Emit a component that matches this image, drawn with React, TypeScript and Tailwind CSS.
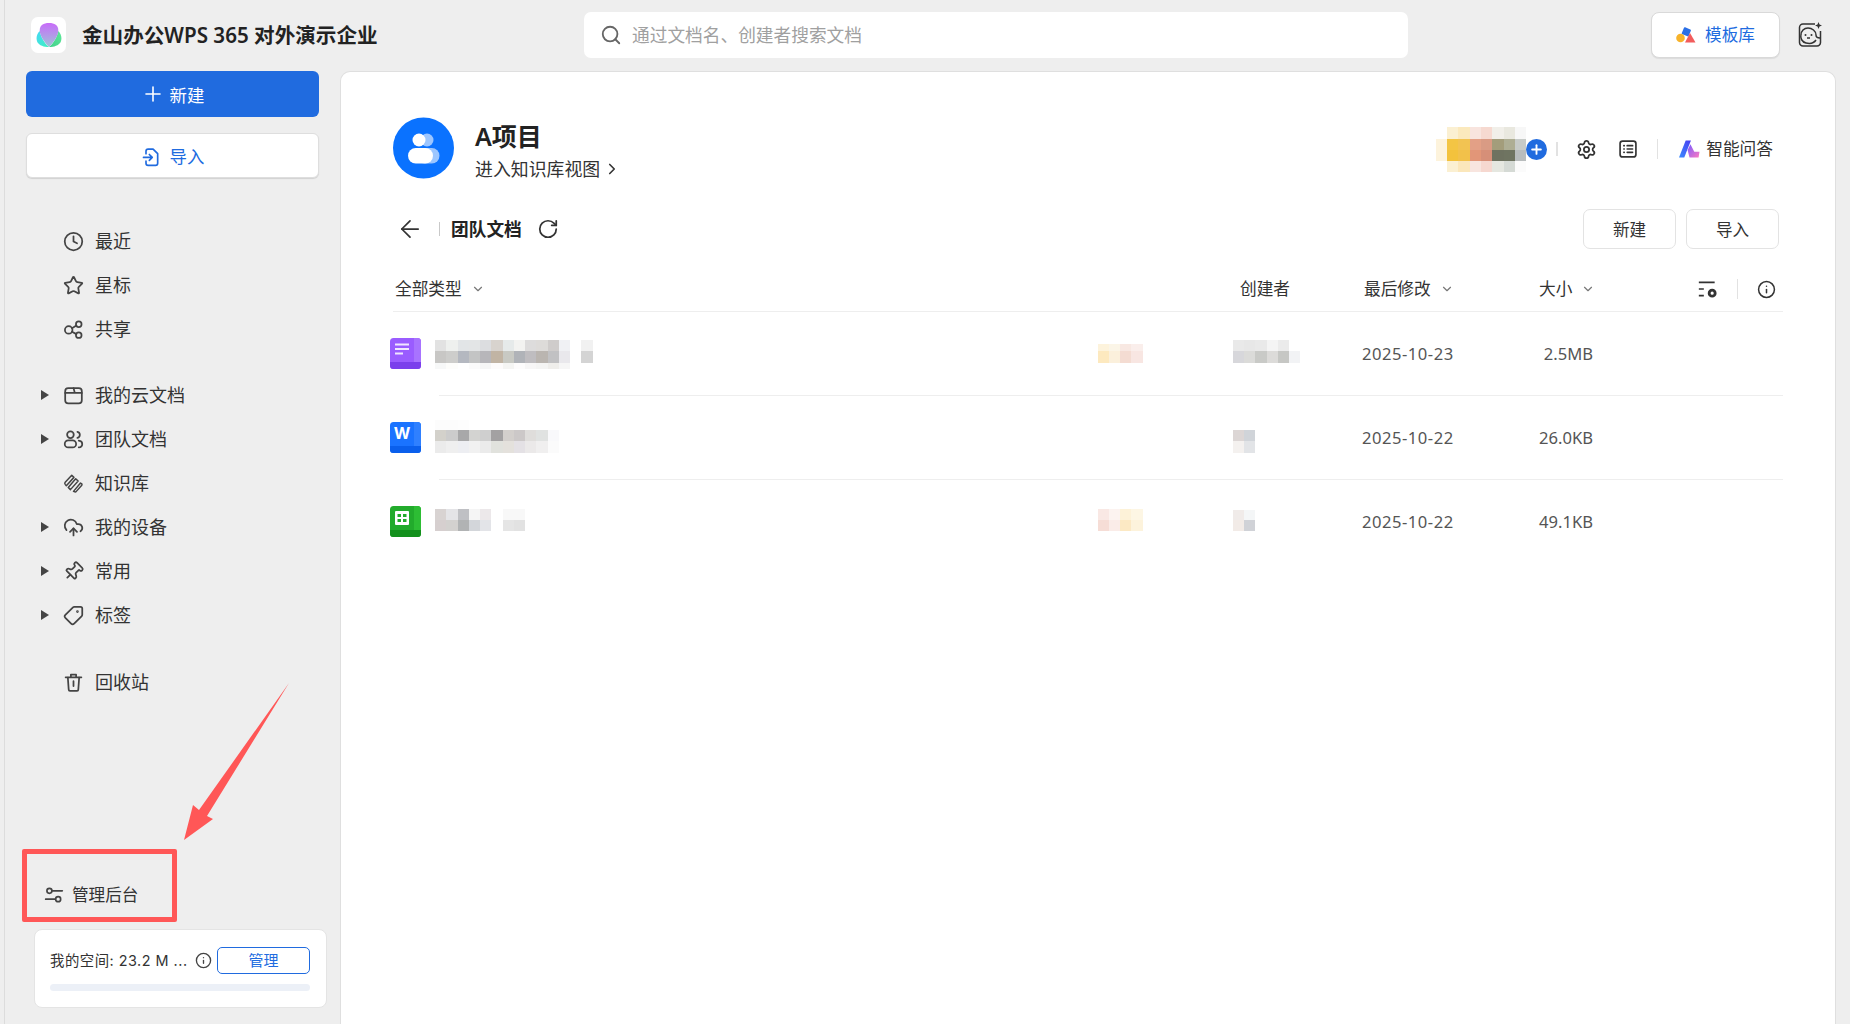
import { ArrowLeft, ChevronDown, ChevronRight, Clock, CloudUpload, Info, Pin, Plus, RotateCw, Search, Settings, Star, Tag } from "lucide-react";
import type { ReactNode } from "react";

type Grid = string[][];

// blurred-out names and avatars, one colour per mosaic cell
const AVATARS: Grid = [
  ["", "#fbf0d2", "#fbe9bd", "#f8e4de", "#f6d9d0", "#f1efe9", "#e9e8df", "#f7f7f7"],
  ["#fdf3dc", "#f3c544", "#f2c352", "#e3a086", "#d99b84", "#a39d7b", "#aeae94", "#c7cbc8"],
  ["#fdf3dc", "#f3c23c", "#f2c14a", "#e29678", "#d68f78", "#6e7260", "#6f7461", "#b8bcbd"],
  ["", "#fbf0d2", "#fbe7bb", "#f8e5df", "#f6d8d0", "#e5e7e0", "#d5dad5", "#fbfbfb"],
];

const rows = [
  {
    kind: "doc",
    name: {
      mt: "mt-[28px]",
      heights: [11, 12, 6],
      grid: [
        ["#e2e2e2", "#eef0ee", "#e2e5e7", "#e3e5e6", "#dcdde0", "#d8d3ce", "#e6eaea", "#f3f3f1", "#dddcdc", "#dddbd9", "#cfcccb", "#f0f1f4", "", "#f1f1f1"],
        ["#c8c7c5", "#cdcdcb", "#b4b8c0", "#c3c4c4", "#b7b6ba", "#c1b4a4", "#c8c9c3", "#b0b3b8", "#bfbdc0", "#bab5b0", "#c1c1c3", "#e9e8ec", "", "#d4d4d4"],
        ["#f7f8f8", "#fdfdfb", "", "#fbfbfb", "#f6f6f6", "#fdfbfb", "#f5f5f3", "#fdfcfc", "#f7f6f6", "#f4f4f3", "#efeeeb", "#f6f6f6"],
      ],
    },
    tag: {
      mt: "mt-[32px]",
      heights: [7, 12],
      grid: [
        ["#fdf3dc", "#fbf5e7", "#f8e8e2", "#faeeeb"],
        ["#fde9bf", "#fbf0dc", "#f4dcd2", "#f8e6e2"],
      ],
    },
    creator: {
      mt: "mt-[28px]",
      heights: [11, 12],
      grid: [
        ["#e9e9e9", "#e7e7e7", "#e9e9e9", "#f4f4f4", "#ebebeb"],
        ["#d7d7db", "#dbdbd9", "#c9cac7", "#dcdbd9", "#c6c7c4", "#f2f3f5"],
      ],
    },
    date: "2025-10-23",
    size: "2.5MB",
  },
  {
    kind: "word",
    name: {
      mt: "mt-[24px]",
      heights: [10, 11, 12],
      grid: [
        ["#fcfcfc", "#fcfcfc", "#fdfdfd"],
        ["#d3d1cb", "#cccccc", "#a8a8a9", "#d3d3d1", "#cfcfcf", "#a3a1a2", "#d3cfcc", "#ccc8c8", "#dfdddb", "#e0e2e1", "#f9f9fb"],
        ["#ebebeb", "#efefef", "#edeef2", "#f1f1f1", "#ebebeb", "#e1e2dd", "#e4e1dc", "#e4e1e5", "#ebe9e9", "#f0efef", "#fbfbfb"],
      ],
    },
    tag: null,
    creator: {
      mt: "mt-[34px]",
      heights: [11, 12],
      grid: [
        ["#dcd6d5", "#d0d4d9"],
        ["#f4f1ef", "#e2e4e7"],
      ],
    },
    date: "2025-10-22",
    size: "26.0KB",
  },
  {
    kind: "sheet",
    name: {
      mt: "mt-[29px]",
      heights: [11, 11],
      grid: [
        ["#d8d3d2", "#e4e4e7", "#bfc0c4", "#f5f5f5", "#ece8ea", "", "#f8f8f8", "#f8f8f8"],
        ["#d6cfcf", "#d3d1cf", "#b1b3b4", "#d3d6da", "#e3e4e8", "", "#e5e5e5", "#e2e2e2"],
      ],
    },
    tag: {
      mt: "mt-[29px]",
      heights: [11, 11],
      grid: [
        ["#f9e8e4", "#fcf3f0", "#fdf2d8", "#fdf6e4"],
        ["#f6ddd6", "#faece8", "#fce9c4", "#fdf3dc"],
      ],
    },
    creator: {
      mt: "mt-[30px]",
      heights: [10, 11],
      grid: [
        ["#f0ebe9", "#f4f6f7"],
        ["#f2ebe7", "#d0d2d7"],
      ],
    },
    date: "2025-10-22",
    size: "49.1KB",
  },
];

function Mosaic({ grid, heights, cell = 11.25, className = "" }: { grid: Grid; heights: number[]; cell?: number; className?: string }) {
  return (
    <div className={`flex flex-col ${className}`}>
      {grid.map((row, i) => (
        <div key={i} className="flex">
          {row.map((color, j) => (
            <div key={j} style={{ width: cell, height: heights[i], backgroundColor: color || "transparent" }} />
          ))}
        </div>
      ))}
    </div>
  );
}

const svgProps = {
  viewBox: "0 0 24 24",
  fill: "none",
  stroke: "currentColor",
  strokeWidth: 2,
  strokeLinecap: "round" as const,
  strokeLinejoin: "round" as const,
};

function ShareIcon() {
  return (
    <svg {...svgProps} className="h-[21px] w-[21px]">
      <circle cx="6.500" cy="12.500" r="4.300" />
      <circle cx="18" cy="6" r="3.200" />
      <circle cx="18" cy="18.500" r="3.200" />
      <path d="M10.300 10.500l5-3M10.300 14.500l5 2.800" />
    </svg>
  );
}

function FolderIcon() {
  return (
    <svg {...svgProps} className="h-[21px] w-[21px]">
      <rect x="2.500" y="3.500" width="19" height="17.500" rx="3.500" />
      <path d="M2.500 9h19M12 3.500L13.500 9" />
    </svg>
  );
}

function TeamIcon() {
  return (
    <svg {...svgProps} className="h-[21px] w-[21px]">
      <circle cx="8.500" cy="6.500" r="3.800" />
      <rect x="2" y="13" width="13" height="8" rx="4" />
      <path d="M16.500 3.200a3.600 3.600 0 010 7M18 13.200c2.400.2 4 1.800 4 3.800s-1.600 3.800-4 4" />
    </svg>
  );
}

function KnowledgeIcon() {
  return (
    <svg {...svgProps} strokeWidth={1.700} className="h-[21px] w-[21px]">
      <path d="M10 2.500L2.500 10.500a2 2 0 000 2.500l1.300 1.500 8.700-9.500-2.500-2.500z" />
      <path d="M14.500 6.500L6 16.500l2.500 2.500 8.800-9.800-2.800-2.700z" />
      <path d="M20 11.500l-8 9.500 1.500.5a1.500 1.500 0 001.700-.5l6.300-7a1.500 1.500 0 000-1.500l-1.500-1z" />
    </svg>
  );
}

function TrashIcon() {
  return (
    <svg {...svgProps} className="h-[21px] w-[21px]">
      <path d="M3 6h18M9 6V3h6v3M5.500 6l1 14a1.500 1.500 0 001.500 1.500h8a1.500 1.500 0 001.500-1.500l1-14M12 10.500v5.500" />
    </svg>
  );
}

function AdminIcon() {
  return (
    <svg {...svgProps} className="h-[20px] w-[20px]">
      <circle cx="6.500" cy="7" r="3" />
      <path d="M10 7h12M2 17h11" />
      <circle cx="17" cy="17" r="3" />
    </svg>
  );
}

function ImportIcon() {
  return (
    <svg {...svgProps} strokeWidth={2} className="h-[20px] w-[20px] text-[#206bdf]">
      <path d="M6 8V5a2.500 2.500 0 012.500-2.500h6L20 8v11.500a2.500 2.500 0 01-2.500 2.500h-9A2.500 2.500 0 016 19.500V17" />
      <path d="M3 12.500h10M10 9l3.500 3.500L10 16" />
    </svg>
  );
}

function ListIcon() {
  return (
    <svg {...svgProps} className="h-[20px] w-[20px]">
      <rect x="2.500" y="2.500" width="19" height="19" rx="3" />
      <path d="M7 8h.5M7 12h.5M7 16h.5M11 8h6.500M11 12h6.500M11 16h6.500" />
    </svg>
  );
}

function ColumnsIcon() {
  return (
    <svg viewBox="0 0 24 24" className="h-[20px] w-[20px] text-[#333]" fill="none" stroke="currentColor" strokeWidth="2">
      <path d="M1 4h19M1 12h6M1 20h6" />
      <circle cx="17" cy="17" r="3.600" strokeWidth="3.400" />
    </svg>
  );
}

function WpsLogo() {
  return (
    <svg viewBox="0 0 28 30" preserveAspectRatio="none" className="h-[24px] w-[26px]">
      <defs>
        <linearGradient id="logoTop" x1="0" y1="0" x2="0" y2="1">
          <stop offset="0" stopColor="#c86bfa" />
          <stop offset="1" stopColor="#9fc4d8" />
        </linearGradient>
        <linearGradient id="logoLeft" x1="0" y1="0" x2="1" y2="1">
          <stop offset="0" stopColor="#46d8f5" />
          <stop offset="1" stopColor="#3ff0c0" />
        </linearGradient>
        <linearGradient id="logoRight" x1="1" y1="0" x2="0" y2="1">
          <stop offset="0" stopColor="#5fe89a" />
          <stop offset="1" stopColor="#3fd08a" />
        </linearGradient>
      </defs>
      <path d="M4 10C1 13-.5 19 1.500 24c2 4 7 6 12.500 6C8 24 5 16 4 10z" fill="url(#logoLeft)" />
      <path d="M24 10c3 3 4.500 9 2.500 14-2 4-7 6-12.500 6 6-6 9-14 10-20z" fill="url(#logoRight)" />
      <path d="M4 9c0-6 4-9 10-9s10 3 10 9c0 7-5 15-10 21C9 24 4 16 4 9z" fill="url(#logoTop)" />
    </svg>
  );
}

function TemplateLogo() {
  return (
    <svg viewBox="0 0 20 16" className="h-[16px] w-[20px]">
      <rect x="6.500" y="1" width="7.500" height="7.500" rx="1" transform="rotate(22 10 5)" fill="#2a6fe6" />
      <circle cx="4.500" cy="11" r="4.300" fill="#f7b32b" />
      <path d="M14 6l5.500 9.500H9z" fill="#f25c5c" />
    </svg>
  );
}

function PetIcon() {
  return (
    <svg viewBox="0 0 24 26" className="h-[26px] w-[24px] text-[#333]" fill="none" stroke="currentColor" strokeWidth="1.500">
      <path d="M17 2H5a3.500 3.500 0 00-3.500 3.500v15A3.500 3.500 0 005 24h14a3.500 3.500 0 003.500-3.500V9" />
      <path d="M3 13c0-4 3-7 7-7s8 3 8 7c0 2 2 3 4 3M3 13c-1 3 1 7 5 8 4 1 8 0 10-3" />
      <circle cx="7.500" cy="13" r="1" fill="currentColor" stroke="none" />
      <circle cx="13.500" cy="13" r="1" fill="currentColor" stroke="none" />
      <path d="M9 16h3" />
      <path d="M20.500 0l1 2.500 2.500 1-2.500 1-1 2.500-1-2.500-2.500-1 2.500-1z" fill="currentColor" stroke="none" />
    </svg>
  );
}

function AiLogo() {
  return (
    <svg viewBox="0 0 22 18" className="h-[18px] w-[21px]">
      <defs>
        <linearGradient id="aiBlue" x1="0" y1="1" x2="1" y2="0">
          <stop offset="0" stopColor="#3a8bff" />
          <stop offset="1" stopColor="#4a3cf0" />
        </linearGradient>
        <linearGradient id="aiPink" x1="0" y1="0" x2="1" y2="1">
          <stop offset="0" stopColor="#7a5cff" />
          <stop offset="1" stopColor="#ff7ac0" />
        </linearGradient>
      </defs>
      <path d="M7 0h5.500L5.500 18H0z" fill="url(#aiBlue)" />
      <path d="M9 10l3-6 4 8h5.500l-1 6H11z" fill="url(#aiPink)" />
    </svg>
  );
}

function TeamAvatar() {
  return (
    <svg viewBox="0 0 61 62" className="h-[62px] w-[61px] shrink-0">
      <circle cx="30.500" cy="31" r="30.500" fill="#0a72ff" />
      <circle cx="34" cy="23" r="6.500" fill="#9cc6ff" />
      <rect x="24" y="31" width="22.500" height="15.500" rx="7.700" fill="#9cc6ff" />
      <circle cx="26" cy="23" r="6.500" fill="#fff" />
      <rect x="15" y="31" width="25" height="15.500" rx="7.700" fill="#fff" />
    </svg>
  );
}

function FileIcon({ kind }: { kind: string }) {
  const colors: Record<string, [string, string, string]> = {
    doc: ["#9a5cff", "#a873ff", "#7b3fec"],
    word: ["#1a73ff", "#2f80ff", "#0a5fec"],
    sheet: ["#22ab2c", "#2dbd34", "#13901c"],
  };
  const [base, side, foot] = colors[kind];
  return (
    <svg viewBox="0 0 31 31" className="h-[31px] w-[31px]">
      <rect width="31" height="31" rx="3.500" fill={base} />
      <path d="M24 0h3.500A3.500 3.500 0 0131 3.500V24h-7z" fill={side} />
      <path d="M0 24h31v3.500a3.500 3.500 0 01-3.500 3.500h-24A3.500 3.500 0 010 27.500z" fill={foot} />
      {kind === "doc" && <path d="M5 6.500h14M5 11h14M5 15.500h8" stroke="#f0e6ff" strokeWidth="2.200" />}
      {kind === "word" && (
        <text x="12" y="17" textAnchor="middle" fontSize="16" fontWeight="700" fill="#fff" fontFamily="Inter, sans-serif">
          W
        </text>
      )}
      {kind === "sheet" && (
        <>
          <rect x="5" y="5" width="14" height="14" rx="1" fill="#fff" />
          <path d="M7.500 8h3.500v3H7.500zM13 8h3.500v3H13zM7.500 13h3.500v3H7.500zM13 13h3.500v3H13z" fill="#22ab2c" />
        </>
      )}
    </svg>
  );
}

function NavRow({ icon, label, caret }: { icon: ReactNode; label: string; caret?: boolean }) {
  return (
    <div className="flex h-[44px] items-center pl-[36px] text-[18px] text-[#333]">
      <span className="flex w-[8px] items-center">
        {caret && <span className="h-0 w-0 border-y-[5px] border-l-[8px] border-y-transparent border-l-[#444]" />}
      </span>
      <span className="ml-[14px] flex w-[21px] items-center justify-center text-[#444]">{icon}</span>
      <span className="ml-[11px]">{label}</span>
    </div>
  );
}

function SortHeader({ label, className }: { label: string; className?: string }) {
  return (
    <span className={`flex items-center ${className ?? ""}`}>
      {label}
      <ChevronDown className="ml-[9px] h-[14px] w-[14px] text-[#777]" strokeWidth={2} />
    </span>
  );
}

export default function App() {
  return (
    <div className="relative flex h-[1024px] w-[1850px] flex-col overflow-hidden bg-[#eeeeee] [font-family:'Noto_Sans','Noto_Sans_CJK_SC',sans-serif]">
      <div className="absolute bottom-0 left-[4px] top-0 w-px bg-[#dcdcdc]" />

      {/* Top bar */}
      <header className="flex h-[70px] shrink-0 items-center">
        <div className="ml-[31px] flex h-[36px] w-[35px] items-center justify-center rounded-[7px] bg-white">
          <WpsLogo />
        </div>
        <h1 className="ml-[16px] w-[502px] text-[20.600px] font-semibold text-[#222]">金山办公WPS 365 对外演示企业</h1>
        <div className="flex h-[46px] w-[824px] items-center rounded-[7px] bg-white pl-[16px] text-[17.700px] text-[#a0a0a0]">
          <Search className="h-[22px] w-[22px] text-[#666]" strokeWidth={2} />
          <span className="ml-[10px]">通过文档名、创建者搜索文档</span>
        </div>
        <button className="ml-[243px] flex h-[46px] w-[129px] items-center justify-center rounded-[8px] border border-[#d9d9d9] bg-white text-[16.600px] text-[#206bdf] shadow-[0_1px_1px_rgba(0,0,0,0.08)]">
          <TemplateLogo />
          <span className="ml-[9px]">模板库</span>
        </button>
        <div className="ml-[18px]">
          <PetIcon />
        </div>
      </header>

      <div className="mt-px flex min-h-0 flex-1">
        {/* Sidebar */}
        <aside className="flex w-[340px] shrink-0 flex-col pl-[5px]">
          <button className="ml-[21px] flex h-[46px] w-[293px] items-center justify-center rounded-[6px] bg-[#206bdf] pt-[2px] text-[17.400px] text-white">
            <Plus className="-mt-[2px] h-[24px] w-[24px]" strokeWidth={1.600} />
            <span className="ml-[5px]">新建</span>
          </button>
          <button className="ml-[21px] mt-[16px] flex h-[45px] w-[293px] items-center justify-center rounded-[6px] border border-[#dedede] bg-white pt-[2px] text-[17.400px] text-[#206bdf] shadow-[0_1px_1px_rgba(0,0,0,0.12)]">
            <ImportIcon />
            <span className="ml-[9px]">导入</span>
          </button>

          <nav className="mt-[41px]">
            <NavRow icon={<Clock className="h-[21px] w-[21px]" strokeWidth={2} />} label="最近" />
            <NavRow icon={<Star className="h-[21px] w-[21px]" strokeWidth={2} />} label="星标" />
            <NavRow icon={<ShareIcon />} label="共享" />
            <div className="h-[22px]" />
            <NavRow caret icon={<FolderIcon />} label="我的云文档" />
            <NavRow caret icon={<TeamIcon />} label="团队文档" />
            <NavRow icon={<KnowledgeIcon />} label="知识库" />
            <NavRow caret icon={<CloudUpload className="h-[21px] w-[21px]" strokeWidth={2} />} label="我的设备" />
            <NavRow caret icon={<Pin className="h-[21px] w-[21px] rotate-45" strokeWidth={2} />} label="常用" />
            <NavRow caret icon={<Tag className="h-[21px] w-[21px] -scale-x-100" strokeWidth={2} />} label="标签" />
            <div className="h-[23px]" />
            <NavRow icon={<TrashIcon />} label="回收站" />
          </nav>

          <div className="mt-auto flex h-[40px] items-center pl-[39px] text-[16.600px] text-[#333]">
            <span className="text-[#444]">
              <AdminIcon />
            </span>
            <span className="ml-[8px]">管理后台</span>
          </div>
          <div className="mb-[16px] ml-[29px] mt-[14px] h-[79px] w-[293px] rounded-[8px] border border-[#e4e4e4] bg-white px-[15px] pt-[17px]">
            <div className="flex items-center">
              <span className="w-[145px] whitespace-nowrap text-[14.400px] tracking-[0.5px] text-[#333] [font-family:Inter,'Noto_Sans_CJK_SC',sans-serif]">我的空间: 23.2 M ...</span>
              <Info className="h-[17px] w-[17px] text-[#444]" strokeWidth={1.900} />
              <button className="ml-[5px] h-[27px] w-[93px] rounded-[5px] border border-[#206bdf] text-[15px] leading-none text-[#206bdf]">管理</button>
            </div>
            <div className="mt-[10px] h-[7px] w-[260px] rounded-full bg-[#ecf0f7]" />
          </div>
        </aside>

        {/* Main card */}
        <main className="mr-[14px] flex-1 rounded-t-[10px] border border-b-0 border-[#dfdfdf] bg-white pl-[52px] pr-[52px] pt-[45px]">
          <div className="flex h-[62px] items-center">
            <TeamAvatar />
            <div className="ml-[21px] flex flex-col self-start">
              <span className="text-[25px] font-semibold leading-[38px] text-[#222]">A项目</span>
              <span className="flex items-center text-[17.900px] leading-[28px] text-[#333]">
                进入知识库视图
                <ChevronRight className="ml-[3px] h-[18px] w-[18px]" strokeWidth={2.200} />
              </span>
            </div>
            <div className="ml-auto mt-[2px] flex items-center text-[16.700px] text-[#333]">
              <Mosaic grid={AVATARS} heights={[12, 11, 11, 11]} cell={11.300} />
              <span className="flex h-[21px] w-[21px] items-center justify-center rounded-full bg-[#206bdf] text-white">
                <Plus className="h-[15px] w-[15px]" strokeWidth={3} />
              </span>
              <span className="ml-[9px] h-[14px] w-[2px] bg-[#e2e2e2]" />
              <Settings className="ml-[18px] h-[21px] w-[21px]" strokeWidth={2} />
              <span className="ml-[21px]">
                <ListIcon />
              </span>
              <span className="ml-[19px] h-[20px] w-px bg-[#e2e2e2]" />
              <span className="ml-[21px]">
                <AiLogo />
              </span>
              <span className="ml-[6px] mr-[10px]">智能问答</span>
            </div>
          </div>

          {/* Toolbar */}
          <div className="mt-[30px] flex h-[40px] items-center text-[#222]">
            <ArrowLeft className="ml-[3px] h-[28px] w-[28px] text-[#333]" strokeWidth={1.500} />
            <span className="ml-[15px] h-[14px] w-px bg-[#c9c9c9]" />
            <span className="ml-[11px] text-[17.700px] font-semibold">团队文档</span>
            <RotateCw className="ml-[15px] h-[22px] w-[22px] text-[#333]" strokeWidth={1.900} />
            <button className="ml-auto h-[40px] w-[93px] rounded-[7px] border border-[#e3e3e3] pt-[2px] text-[16.600px] text-[#333]">新建</button>
            <button className="ml-[10px] mr-[4px] h-[40px] w-[93px] rounded-[7px] border border-[#e3e3e3] pt-[2px] text-[16.600px] text-[#333]">导入</button>
          </div>

          {/* Table header */}
          <div className="grid h-[63px] grid-cols-[847px_124px_175px_159px_85px] items-end border-b border-[#eeeeee] pb-[10px] text-[16.700px] leading-[24px] text-[#333]">
            <SortHeader label="全部类型" className="pl-[2px]" />
            <span>创建者</span>
            <SortHeader label="最后修改" />
            <SortHeader label="大小" />
            <span className="mb-[2px] flex items-center">
              <ColumnsIcon />
              <span className="ml-[19px] h-[20px] w-px bg-[#e2e2e2]" />
              <Info className="ml-[19px] h-[19px] w-[19px]" strokeWidth={1.900} />
            </span>
          </div>

          {/* Rows */}
          {rows.map((row, i) => (
            <div key={row.date + row.size}>
              <div className="-ml-[3px] grid h-[83px] grid-cols-[45px_662.500px_135.500px_129px_120px_111px] items-center text-[#555]">
                <FileIcon kind={row.kind} />
                <Mosaic grid={row.name.grid} heights={row.name.heights} className={`self-start ${row.name.mt}`} />
                <div className="self-start">
                  {row.tag && <Mosaic grid={row.tag.grid} heights={row.tag.heights} cell={11.300} className={row.tag.mt} />}
                </div>
                <Mosaic grid={row.creator.grid} heights={row.creator.heights} cell={11.200} className={`self-start ${row.creator.mt}`} />
                <span className="mt-[2px] text-[16.600px] tracking-[0.5px]">{row.date}</span>
                <span className="mt-[2px] text-right text-[16.600px]">{row.size}</span>
              </div>
              {i < rows.length - 1 && <div className="ml-[46px] h-px bg-[#eeeeee]" />}
            </div>
          ))}
        </main>
      </div>

      {/* Red annotation over the sidebar */}
      <div className="absolute left-[22px] top-[849px] h-[73px] w-[155px] rounded-[2px] border-[5px] border-[#ff5757]" />
      <svg viewBox="0 0 1850 1024" className="pointer-events-none absolute left-0 top-0 h-[1024px] w-[1850px]">
        <path d="M289 683L207 816L213 819L184 840L193 805L199 810Z" fill="#ff5757" />
      </svg>
    </div>
  );
}
